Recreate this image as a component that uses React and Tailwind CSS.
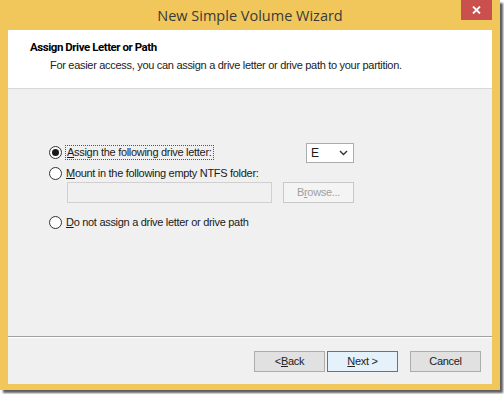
import React from "react";

const Radio = ({ checked }) => (
  <span className="w-[13px] h-[13px] rounded-full border border-[#333] bg-white flex items-center justify-center shrink-0">
    {checked && <span className="w-[7px] h-[7px] rounded-full bg-[#1a1a1a]" />}
  </span>
);

const Button = ({ children, primary, disabled, className = "" }) => (
  <div
    className={`h-[21px] flex items-center justify-center border text-[11px] tracking-[-0.3px] ${
      primary
        ? "border-[#3c7fb1] bg-[#e5f1fb] text-[#222]"
        : disabled
        ? "border-[#c8c8c8] bg-[#f4f4f4] text-[#a0a0a0]"
        : "border-[#adadad] bg-[#e1e1e1] text-[#222]"
    } ${className}`}
  >
    {children}
  </div>
);

export default function App() {
  return (
    <div className="w-[504px] h-[394px] bg-white font-['Liberation_Sans',Arial,sans-serif]">
      <div className="w-[500px] h-[390px] bg-[#f1c75c] flex flex-col shadow-[3px_3px_2px_rgba(40,40,40,0.75)]">
        {/* Title bar */}
        <div className="h-[30px] flex items-start relative">
          <div className="flex-1 h-[30px] flex items-center justify-center pt-[1px] text-[14.5px] text-[#3a3a3a] font-['Open_Sans',sans-serif]">
            New Simple Volume Wizard
          </div>
          <div className="absolute right-[8px] top-0 w-[31px] h-[20px] bg-[#c9504c] flex items-center justify-center">
            <svg width="9" height="8" viewBox="0 0 9 8">
              <path d="M1 0.5 L8 7.5 M8 0.5 L1 7.5" stroke="white" strokeWidth="1.8" />
            </svg>
          </div>
        </div>

        {/* Client area */}
        <div className="flex-1 mx-[8px] mb-[6px] bg-[#f0f0f0] flex flex-col">
          <div className="h-[59px] bg-white border-b border-[#d8d8d8] pl-[22px] pt-[9px]">
            <div className="text-[11.5px] font-bold text-[#000] font-['Roboto',sans-serif] tracking-[-0.45px]">
              Assign Drive Letter or Path
            </div>
            <div className="text-[11px] tracking-[-0.3px] text-[#222] pl-[20px] mt-[1px]">
              For easier access, you can assign a drive letter or drive path to your partition.
            </div>
          </div>

          <div className="flex-1 pl-[41px] pr-[138px] pt-[53px] text-[11px] tracking-[-0.3px] text-[#1a1a1a]">
            <div className="flex items-center h-[21px]">
              <Radio checked />
              <span className="ml-[3px] px-[1px] border border-dotted border-[#555] leading-[13px]">
                <span className="underline">A</span>ssign the following drive letter:
              </span>
              <div className="ml-auto w-[48px] h-[20px] bg-white border border-[#acacac] flex items-center pl-[4px] pr-[5px]">
                <span className="text-[12px]">E</span>
                <svg className="ml-auto" width="9" height="6" viewBox="0 0 9 6">
                  <path d="M1 1 L4.5 4.5 L8 1" stroke="#333" strokeWidth="1.4" fill="none" />
                </svg>
              </div>
            </div>
            <div className="flex items-center h-[16px] mt-[2px]">
              <Radio />
              <span className="ml-[4px]">
                <span className="underline">M</span>ount in the following empty NTFS folder:
              </span>
            </div>
            <div className="flex items-center mt-[1px] pl-[18px]">
              <div className="w-[205px] h-[21px] bg-[#f0f0f0] border border-[#d0d0d0]" />
              <Button disabled className="ml-auto w-[71px]">
                B<span className="underline">r</span>owse...
              </Button>
            </div>
            <div className="flex items-center h-[16px] mt-[11px]">
              <Radio />
              <span className="ml-[4px]">
                <span className="underline">D</span>o not assign a drive letter or drive path
              </span>
            </div>
          </div>

          <div className="h-[48px] border-t border-[#a0a0a0] shadow-[inset_0_1px_0_#ffffff] flex items-start justify-end pt-[14px] pr-[11px]">
            <Button className="w-[71px]">
              &lt; <span className="underline">B</span>ack
            </Button>
            <Button primary className="w-[71px] ml-[2px]">
              <span className="underline">N</span>ext &gt;
            </Button>
            <Button className="w-[71px] ml-[12px]">Cancel</Button>
          </div>
        </div>
      </div>
    </div>
  );
}
